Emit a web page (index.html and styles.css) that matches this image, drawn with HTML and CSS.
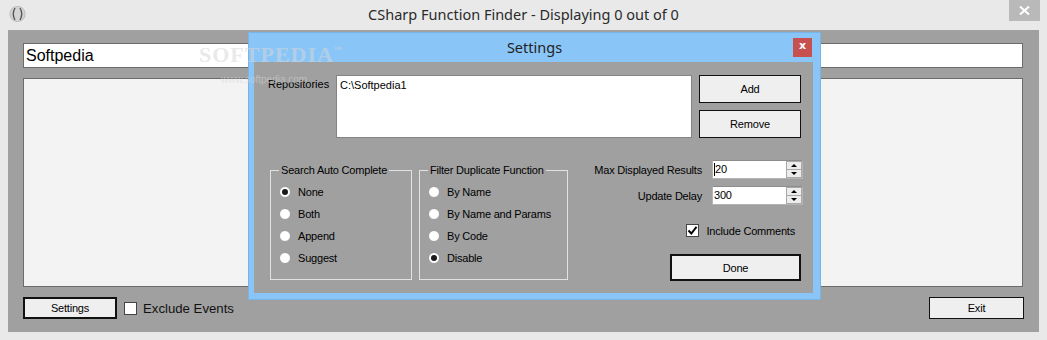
FILE: index.html
```html
<!DOCTYPE html>
<html lang="en">
<head>
  <meta charset="UTF-8">
  <title>CSharp Function Finder</title>
  <link rel="stylesheet" href="styles.css">
</head>
<body>
  <div class="window">
    <div class="titlebar">
      <svg class="app-icon" width="17" height="16" viewBox="0 0 17 16">
        <rect x="1" y="0.5" width="15" height="15" rx="7" fill="#d4d4d4" stroke="#bdbdbd"/>
        <path d="M6 2 Q2.5 8 6 14" fill="none" stroke="#555" stroke-width="1.4"/>
        <path d="M11 2 Q14.5 8 11 14" fill="none" stroke="#555" stroke-width="1.4"/>
      </svg>
      <div class="title">CSharp Function Finder - Displaying 0 out of 0</div>
      <div class="close-btn">
        <svg width="11" height="9" viewBox="0 0 11 9">
          <path d="M1 0.5 L10 8.5 M10 0.5 L1 8.5" stroke="#fff" stroke-width="2"/>
        </svg>
      </div>
    </div>
    <div class="client">
      <div class="search">Softpedia</div>
      <div class="results"></div>
      <div class="footer">
        <button class="btn btn-default settings-btn">Settings</button>
        <label class="check exclude">
          <span class="box"></span>
          Exclude Events
        </label>
        <button class="btn exit-btn">Exit</button>
      </div>
    </div>
  </div>

  <!-- settings dialog, floating over the main window -->
  <div class="dialog">
    <div class="dlg-title">
      Settings
      <div class="dlg-close">x</div>
    </div>
    <div class="dlg-body">
      <div class="repo-row">
        <div class="repo-label">Repositories</div>
        <div class="repo-box">C:\Softpedia1</div>
        <div class="repo-buttons">
          <button class="btn repo-btn">Add</button>
          <button class="btn repo-btn">Remove</button>
        </div>
      </div>
      <div class="options-row">
        <fieldset class="group group-auto">
          <legend>Search Auto Complete</legend>
          <div class="radio checked"><span class="dot"></span>None</div>
          <div class="radio"><span class="dot"></span>Both</div>
          <div class="radio"><span class="dot"></span>Append</div>
          <div class="radio"><span class="dot"></span>Suggest</div>
        </fieldset>
        <fieldset class="group group-filter">
          <legend>Filter Duplicate Function</legend>
          <div class="radio"><span class="dot"></span>By Name</div>
          <div class="radio"><span class="dot"></span>By Name and Params</div>
          <div class="radio"><span class="dot"></span>By Code</div>
          <div class="radio checked"><span class="dot"></span>Disable</div>
        </fieldset>
        <div class="right-col">
          <div class="spin-row">
            <span class="spin-label">Max Displayed Results</span>
            <div class="spin"><span class="caret"></span>20<span class="arrows"><span class="up"></span><span class="down"></span></span></div>
          </div>
          <div class="spin-row">
            <span class="spin-label">Update Delay</span>
            <div class="spin">300<span class="arrows"><span class="up"></span><span class="down"></span></span></div>
          </div>
          <label class="check comments">
            <span class="box">
              <svg width="11" height="11" viewBox="0 0 11 11"><path d="M1.5 5.5 L4.3 8.5 L9.5 1.8" fill="none" stroke="#000" stroke-width="2"/></svg>
            </span>
            Include Comments
          </label>
          <button class="btn btn-default done-btn">Done</button>
        </div>
      </div>
    </div>
  </div>

  <div class="watermark">SOFTPEDIA<sup>™</sup><small>www.softpedia.com</small></div>
</body>
</html>
```

FILE: styles.css
```css
body {
  margin: 0;
  width: 1047px;
  height: 340px;
  overflow: hidden;
  position: relative;
  background: #e9e9e9;
  font-family: "Liberation Sans", Arial, sans-serif;
  font-size: 11px;
  color: #000;
}
.titlebar {
  height: 30px;
  display: grid;
  grid-template-columns: 1fr auto 1fr;
  align-items: start;
}
.app-icon {
  margin: 6px 0 0 9px;
}
.title {
  font-family: "Noto Sans", sans-serif;
  font-size: 14.5px;
  color: #2b2b2b;
  line-height: 28px;
}
.close-btn {
  justify-self: end;
  width: 31px;
  height: 21px;
  margin-right: 7px;
  background: #b9b9b9;
  display: flex;
  align-items: center;
  justify-content: center;
}
.client {
  margin: 0 8px;
  height: 302px;
  box-sizing: border-box;
  background: #a0a0a0;
  padding: 13px 16px 13px 15px;
  display: flex;
  flex-direction: column;
  gap: 10px;
}
.search {
  height: 25px;
  box-sizing: border-box;
  border: 1px solid #6b6b6b;
  background: #fff;
  font-size: 16px;
  line-height: 23px;
  padding-left: 2px;
}
.results {
  flex: 1;
  background: #f3f3f3;
  border: 1px solid #6b6b6b;
}
.footer {
  display: flex;
  align-items: center;
  height: 22px;
}
.btn {
  font-family: "Liberation Sans", Arial, sans-serif;
  font-size: 11px;
  letter-spacing: -0.2px;
  color: #000;
  background: #efefef;
  border: 1px solid #111;
  padding: 0;
  margin: 0;
  box-sizing: border-box;
}
.btn-default {
  border-width: 2px;
}
.settings-btn {
  width: 94px;
  height: 22px;
}
.exit-btn {
  width: 95px;
  height: 22px;
  margin-left: auto;
  margin-right: -1px;
}
.check {
  display: flex;
  align-items: center;
}
.check .box {
  width: 13px;
  height: 13px;
  box-sizing: border-box;
  background: #fff;
  border: 1px solid #444;
  display: flex;
  align-items: center;
  justify-content: center;
}
.exclude {
  margin-left: 7px;
  gap: 6px;
  font-size: 13.2px;
  color: #111;
}

/* dialog */
.dialog {
  position: absolute;
  left: 248px;
  top: 32px;
  width: 573px;
  height: 268px;
  box-sizing: border-box;
  background: #8ac5f7;
  border: 1px solid #79b4e6;
  display: flex;
  flex-direction: column;
}
.dlg-title {
  height: 29px;
  position: relative;
  text-align: center;
  font-family: "Noto Sans", sans-serif;
  font-size: 14.5px;
  line-height: 28px;
  color: #222;
}
.dlg-close {
  position: absolute;
  right: 8px;
  top: 5px;
  width: 19px;
  height: 19px;
  background: #c75050;
  color: #fff;
  font-family: "DejaVu Sans", sans-serif;
  font-size: 11px;
  font-weight: bold;
  line-height: 16px;
  text-align: center;
}
.dlg-body {
  flex: 1;
  margin: 0 7px 6px 5px;
  background: #a0a0a0;
}
.repo-row {
  display: flex;
  padding: 13px 0 0 14px;
}
.repo-label {
  width: 68px;
  padding-top: 3px;
}
.repo-box {
  width: 356px;
  height: 63px;
  box-sizing: border-box;
  background: #fff;
  border: 1px solid #838383;
  padding: 3px 3px;
}
.repo-buttons {
  margin-left: 7px;
  display: flex;
  flex-direction: column;
  gap: 7px;
}
.repo-btn {
  width: 102px;
  height: 28px;
}
.options-row {
  display: flex;
  align-items: flex-start;
  margin-top: 26px;
  padding-left: 16px;
}
.group {
  margin: 0;
  padding: 4px 0 0 8px;
  height: 116px;
  box-sizing: border-box;
  border: 1px solid #e2e2e2;
}
.group legend {
  padding: 0 2px;
  margin-left: 0;
  line-height: 13px;
  letter-spacing: -0.2px;
}
.group-auto {
  width: 142px;
}
.group-filter {
  width: 149px;
  margin-left: 7px;
}
.radio {
  height: 22px;
  display: flex;
  align-items: center;
  gap: 7px;
  letter-spacing: -0.2px;
}
.radio .dot {
  width: 12px;
  height: 12px;
  box-sizing: border-box;
  border-radius: 50%;
  background: #fff;
  border: 1px solid #9a9a9a;
  display: flex;
  align-items: center;
  justify-content: center;
}
.radio.checked .dot::after {
  content: "";
  width: 6px;
  height: 6px;
  border-radius: 50%;
  background: #1a1a1a;
}
.right-col {
  margin-left: auto;
  margin-right: 10px;
  margin-top: -4px;
  display: flex;
  flex-direction: column;
  align-items: flex-end;
  gap: 7px;
}
.spin-row {
  display: flex;
  align-items: center;
  gap: 10px;
  letter-spacing: -0.2px;
}
.spin {
  width: 91px;
  height: 19px;
  box-sizing: border-box;
  background: #fff;
  border: 1px solid #b4b4b4;
  border-top-color: #8c8c8c;
  position: relative;
  padding-left: 1px;
  line-height: 17px;
  display: flex;
}
.caret {
  width: 1px;
  height: 13px;
  background: #000;
  margin-top: 2px;
}
.arrows {
  margin-left: auto;
  width: 16px;
  display: flex;
  flex-direction: column;
}
.arrows span {
  flex: 1;
  background: #ececec;
  border: 1px solid #a9a9a9;
  position: relative;
}
.arrows span + span {
  border-top: none;
}
.arrows span::after {
  content: "";
  position: absolute;
  left: 4px;
  top: 2px;
  border-left: 3px solid transparent;
  border-right: 3px solid transparent;
}
.arrows .up::after {
  border-bottom: 3px solid #000;
}
.arrows .down::after {
  border-top: 3px solid #000;
}
.comments {
  margin-top: 12px;
  margin-right: 8px;
  gap: 7px;
  letter-spacing: -0.2px;
}
.done-btn {
  width: 131px;
  height: 27px;
  margin-top: 10px;
  margin-right: 2px;
}

.watermark {
  position: absolute;
  left: 199px;
  top: 42px;
  font-family: "Liberation Serif", serif;
  font-weight: bold;
  font-size: 22px;
  letter-spacing: 1px;
  color: rgba(215, 215, 215, 0.55);
  pointer-events: none;
}
.watermark sup {
  font-size: 8px;
  vertical-align: 10px;
}
.watermark small {
  display: block;
  font-family: "Liberation Sans", sans-serif;
  font-weight: normal;
  font-size: 10px;
  letter-spacing: 0;
  margin: 6px 0 0 22px;
}
```
